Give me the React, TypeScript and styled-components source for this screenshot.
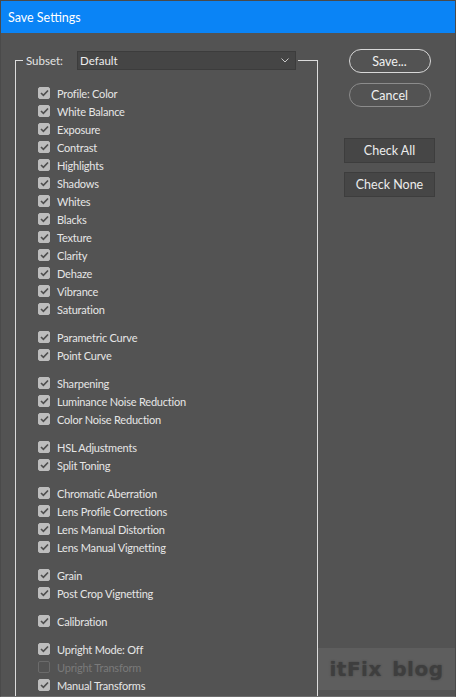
import React from "react";
import styled, { createGlobalStyle } from "styled-components";

const GlobalStyle = createGlobalStyle`
  html, body {
    margin: 0;
    padding: 0;
    background: #535353;
  }
  body {
    font-family: Lato, "Noto Sans CJK KR", sans-serif;
  }
`;

type Item = { label: string; checked?: boolean; disabled?: boolean };

const groups: Item[][] = [
  [
    { label: "Profile: Color" },
    { label: "White Balance" },
    { label: "Exposure" },
    { label: "Contrast" },
    { label: "Highlights" },
    { label: "Shadows" },
    { label: "Whites" },
    { label: "Blacks" },
    { label: "Texture" },
    { label: "Clarity" },
    { label: "Dehaze" },
    { label: "Vibrance" },
    { label: "Saturation" },
  ],
  [{ label: "Parametric Curve" }, { label: "Point Curve" }],
  [
    { label: "Sharpening" },
    { label: "Luminance Noise Reduction" },
    { label: "Color Noise Reduction" },
  ],
  [{ label: "HSL Adjustments" }, { label: "Split Toning" }],
  [
    { label: "Chromatic Aberration" },
    { label: "Lens Profile Corrections" },
    { label: "Lens Manual Distortion" },
    { label: "Lens Manual Vignetting" },
  ],
  [{ label: "Grain" }, { label: "Post Crop Vignetting" }],
  [{ label: "Calibration" }],
  [
    { label: "Upright Mode: Off" },
    { label: "Upright Transform", checked: false, disabled: true },
    { label: "Manual Transforms" },
  ],
];

const Window = styled.div`
  position: relative;
  width: 456px;
  height: 697px;
  box-sizing: border-box;
  border: 1px solid #4a4a4a;
  border-bottom-color: #6c6c6c;
  background: #535353;
  overflow: hidden;
  display: flex;
  flex-direction: column;
`;

const TitleBar = styled.div`
  height: 32px;
  flex: none;
  background: #0a84f6;
  color: #ffffff;
  font-size: 12.5px;
  display: flex;
  align-items: center;
  padding-left: 7px;
`;

const Body = styled.div`
  flex: 1;
  display: flex;
  align-items: flex-start;
  padding: 18px 0 0 14px;
`;

const Group = styled.fieldset`
  width: 303px;
  box-sizing: border-box;
  margin: 0;
  padding: 0;
  border: 1px solid #dcdcdc;
  border-bottom: none;
  min-height: 700px;
`;

const Legend = styled.legend`
  margin-left: 7px;
  padding: 0 2px 0 3px;
  display: flex;
  align-items: center;
  height: 18px;
`;

const LegendLabel = styled.span`
  color: #e4e4e4;
  font-size: 11.5px;
  width: 51px;
`;

const Select = styled.div`
  width: 219px;
  height: 19px;
  box-sizing: border-box;
  background: #454545;
  border: 1px solid #3c3c3c;
  display: flex;
  align-items: center;
  justify-content: space-between;
  padding: 0 6px 0 2px;
  color: #ececec;
  font-size: 11.5px;
`;

const List = styled.div`
  display: flex;
  flex-direction: column;
  gap: 10px;
  padding: 15px 0 0 22px;
`;

const Section = styled.div`
  display: flex;
  flex-direction: column;
`;

const Row = styled.label<{ $disabled?: boolean }>`
  height: 18px;
  display: flex;
  align-items: center;
  gap: 7px;
  font-size: 11px;
  letter-spacing: -0.2px;
  color: ${(p) => (p.$disabled ? "#7a7a7a" : "#e6e6e6")};
`;

const Box = styled.span<{ $checked: boolean }>`
  width: 12px;
  height: 12px;
  box-sizing: border-box;
  border-radius: 2px;
  flex: none;
  display: flex;
  align-items: center;
  justify-content: center;
  background: ${(p) => (p.$checked ? "#bdbdbd" : "transparent")};
  border: 1px solid ${(p) => (p.$checked ? "#bdbdbd" : "#6b6b6b")};
`;

const Side = styled.div`
  width: 91px;
  margin-left: 26px;
  margin-top: -2px;
  display: flex;
  flex-direction: column;
  align-items: center;
`;

const Pill = styled.button<{ $primary?: boolean }>`
  width: 82px;
  height: 24px;
  box-sizing: border-box;
  border-radius: 12px;
  background: transparent;
  border: ${(p) => (p.$primary ? "1.5px solid #d8d8d8" : "1px solid #8c8c8c")};
  color: #f0f0f0;
  font-family: inherit;
  font-size: 12.5px;
  padding: 0;
  margin-bottom: 10px;
`;

const FlatButton = styled.button`
  width: 91px;
  height: 25px;
  box-sizing: border-box;
  background: #464646;
  border: 1px solid #3d3d3d;
  color: #ececec;
  font-family: inherit;
  font-size: 12.5px;
  padding: 0;
  margin-bottom: 9px;
`;

const Spacer = styled.div`
  height: 21px;
`;

const Watermark = styled.div`
  position: absolute;
  right: 0;
  bottom: 6px;
  width: 137px;
  height: 42px;
  background: #5e5e5e;
  display: flex;
  align-items: center;
  justify-content: center;
  font-family: "DejaVu Sans", "Liberation Sans", sans-serif;
  font-weight: bold;
  font-size: 20px;
  letter-spacing: 0.5px;
  word-spacing: 3px;
  color: #3e3e3e;
  text-shadow: 0 0 2px rgba(40, 40, 40, 0.5);
`;

const Check = () => (
  <svg width="9" height="8" viewBox="0 0 9 8">
    <polyline
      points="1,4 3.4,6.3 8,1.5"
      fill="none"
      stroke="#4f4f4f"
      strokeWidth="1.7"
    />
  </svg>
);

const Chevron = () => (
  <svg width="8" height="5" viewBox="0 0 8 5">
    <polyline points="0.5,0.5 4,4 7.5,0.5" fill="none" stroke="#c8c8c8" strokeWidth="1" />
  </svg>
);

export default function App() {
  return (
    <>
      <GlobalStyle />
      <Window>
        <TitleBar>Save Settings</TitleBar>
        <Body>
          <Group>
            <Legend>
              <LegendLabel>Subset:</LegendLabel>
              <Select>
                <span>Default</span>
                <Chevron />
              </Select>
            </Legend>
            <List>
              {groups.map((g, i) => (
                <Section key={i}>
                  {g.map((item) => {
                    const checked = item.checked !== false;
                    return (
                      <Row key={item.label} $disabled={item.disabled}>
                        <Box $checked={checked}>{checked && <Check />}</Box>
                        {item.label}
                      </Row>
                    );
                  })}
                </Section>
              ))}
            </List>
          </Group>
          <Side>
            <Pill $primary>Save...</Pill>
            <Pill>Cancel</Pill>
            <Spacer />
            <FlatButton>Check All</FlatButton>
            <FlatButton>Check None</FlatButton>
          </Side>
        </Body>
        <Watermark>itFix blog</Watermark>
      </Window>
    </>
  );
}
